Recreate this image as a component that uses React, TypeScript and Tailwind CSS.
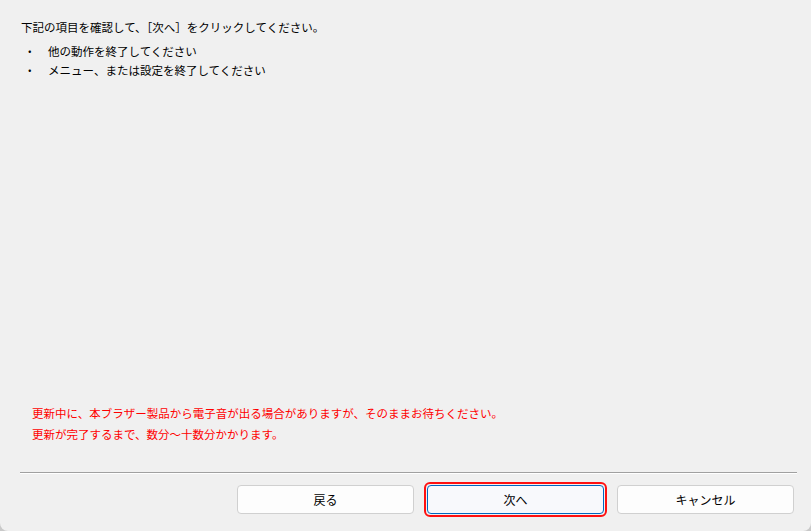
import React from 'react';

const jp = '"Noto Sans CJK JP", "Noto Sans", sans-serif';

const steps = ['他の動作を終了してください', 'メニュー、または設定を終了してください'];

function DialogButton({ label, focused }: { label: string; focused?: boolean }) {
    if (focused) {
        return (
            <div className="rounded-[6px] border-2 border-[#ff1010] p-px">
                <button className="flex h-[29px] w-[177px] items-center justify-center rounded-[4px] border border-[#0067c0] bg-[#f8f9fc] text-[12px] text-black">
                    {label}
                </button>
            </div>
        );
    }
    return (
        <button className="flex h-[29px] w-[177px] items-center justify-center rounded-[4px] border border-[#d0d0d0] bg-[#fdfdfd] text-[12px] text-black">
            {label}
        </button>
    );
}

export default function App() {
    return (
        <div className="h-[531px] w-[811px] bg-[#c9c9c9]" style={{ fontFamily: jp }}>
            <div className="flex h-full w-full flex-col rounded-b-[8px] bg-[#f0f0f0]">
                {/* Instructions */}
                <div className="px-[21px] pt-[17px] text-[11.5px] leading-[20px] text-black">
                    <p className="mb-[5px]">下記の項目を確認して、［次へ］をクリックしてください。</p>
                    <ul className="leading-[19px]">
                        {steps.map((s) => (
                            <li key={s} className="flex">
                                <span className="w-[27px] pl-[3px]">・</span>
                                <span>{s}</span>
                            </li>
                        ))}
                    </ul>
                </div>

                <div className="flex-1" />

                {/* Warning */}
                <div className="px-[32px] pb-[27px] text-[11.5px] leading-[21px] text-[#ff0000]">
                    <p>更新中に、本ブラザー製品から電子音が出る場合がありますが、そのままお待ちください。</p>
                    <p>更新が完了するまで、数分～十数分かかります。</p>
                </div>

                {/* Footer */}
                <div className="mx-[20px] mr-[14px] border-t border-b border-t-[#a0a0a0] border-b-white" />
                <div className="flex items-center justify-end gap-[10px] pb-[14px] pr-[17px] pt-[8px]">
                    <DialogButton label="戻る" />
                    <DialogButton label="次へ" focused />
                    <DialogButton label="キャンセル" />
                </div>
            </div>
        </div>
    );
}
